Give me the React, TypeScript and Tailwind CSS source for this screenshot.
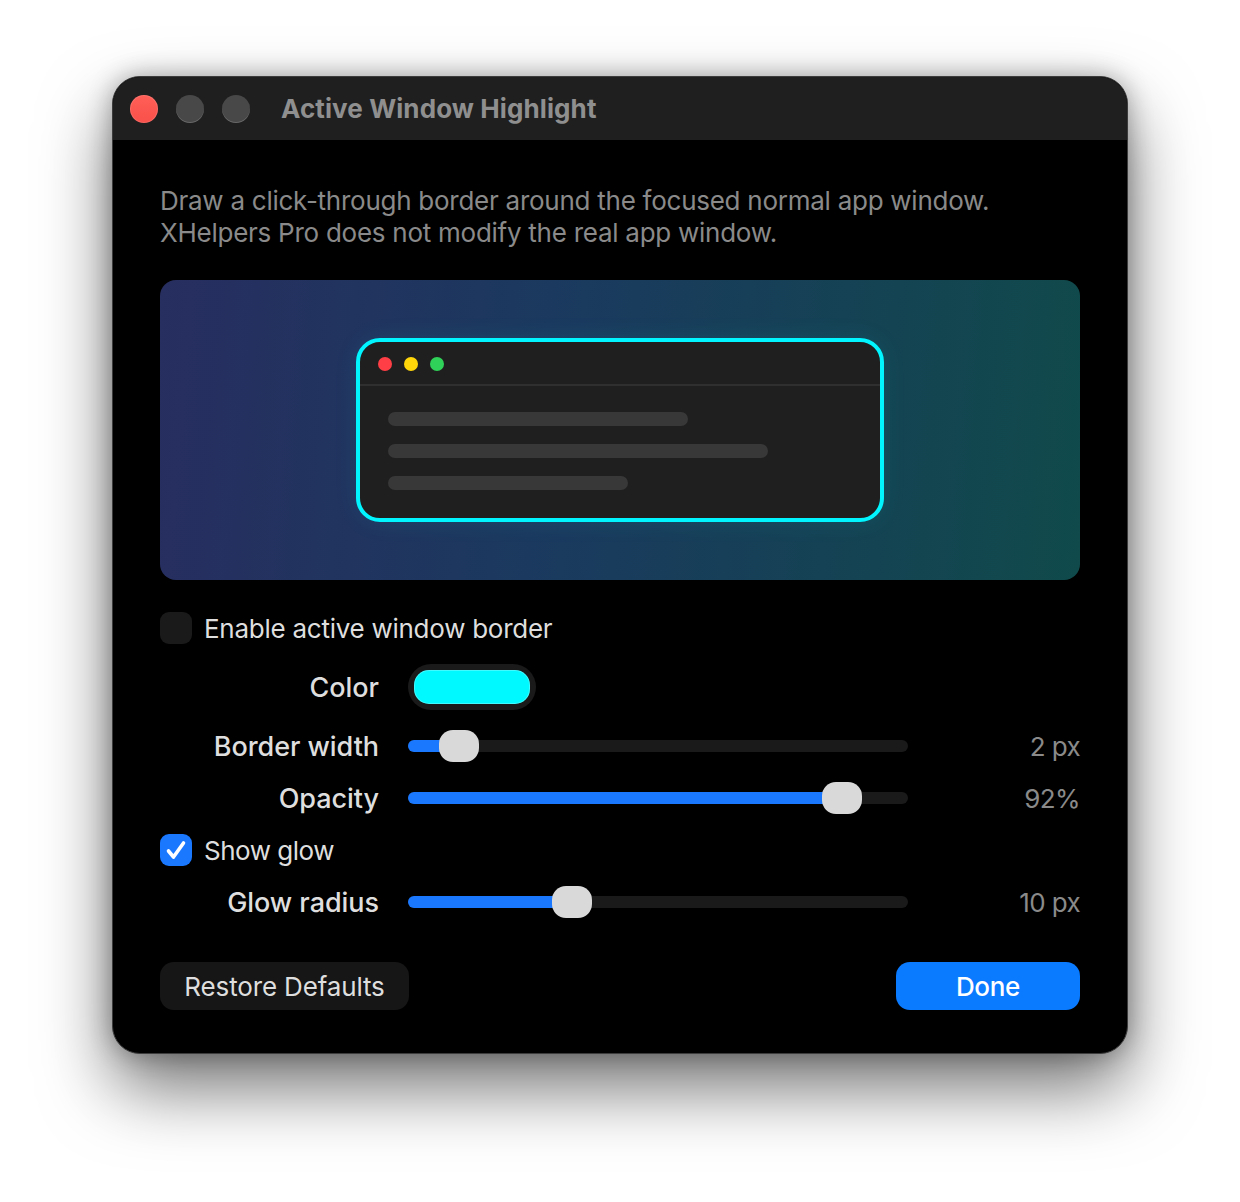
const sliders = {
  border: { label: 'Border width', value: '2 px', left: 31 },
  opacity: { label: 'Opacity', value: '92%', left: 414 },
  glow: { label: 'Glow radius', value: '10 px', left: 144 },
};

function Slider({ label, value, left }: { label: string; value: string; left: number }) {
  return (
    <div className="flex h-8 items-center">
      <span className="w-[219px] pt-[1px] text-right text-[27px] font-medium leading-8 tracking-[-0.05px] text-[#dedede]">{label}</span>
      <div className="relative ml-[29px] h-3 w-[500px] rounded-full bg-[#1a1a1a]">
        <div className="absolute inset-y-0 left-0 rounded-full bg-[#1a78ff]" style={{ width: left + 10 }} />
        <div className="absolute top-[-10px] h-8 w-10 rounded-[14px] bg-[#d9d9d9]" style={{ left }} />
      </div>
      <span className="ml-auto pt-[1px] text-[26px] leading-8 tracking-[-0.6px] text-[#8a8a8a]">{value}</span>
    </div>
  );
}

export default function App() {
  return (
    <div className="h-[1202px] w-[1240px] bg-white pl-[112px] pt-[76px] font-['Inter',sans-serif]">
      <div className="h-[978px] w-[1016px] overflow-hidden rounded-[28px] border border-[#3c3c3c] bg-black shadow-[0_34px_70px_rgba(0,0,0,0.55),0_0_24px_rgba(0,0,0,0.3)]">
        <div className="flex h-[63px] items-center bg-[#1f1f1f] pl-[17px]">
          <span className="h-7 w-7 rounded-full bg-gradient-to-b from-[#ff5f57] to-[#f9504a] shadow-[inset_0_0_0_1px_rgba(255,255,255,0.12)]" />
          <span className="ml-[18px] h-7 w-7 rounded-full bg-[#484848] shadow-[inset_0_-1px_0_rgba(255,255,255,0.18)]" />
          <span className="ml-[18px] h-7 w-7 rounded-full bg-[#484848] shadow-[inset_0_-1px_0_rgba(255,255,255,0.18)]" />
          <span className="ml-[31px] text-[26px] font-bold leading-8 tracking-[0.1px] text-[#8f8f8f]">Active Window Highlight</span>
        </div>

        <div className="px-[47px] pt-[45px]">
          <p className="text-[26px] leading-8 tracking-[-0.26px] text-[#8a8a8a]">
            Draw a click-through border around the focused normal app window.
            <br />
            XHelpers Pro does not modify the real app window.
          </p>

          <div className="mt-[31px] flex h-[300px] items-center justify-center rounded-2xl bg-[linear-gradient(95deg,#272e60,#1a3a5e_45%,#104a4b)]">
            <div className="h-[184px] w-[528px] overflow-hidden rounded-[24px] border-4 border-[#00f5ff] bg-[#1f1f1f] shadow-[0_0_24px_rgba(0,245,255,0.08)]">
              <div className="flex h-[44px] items-center gap-3 border-b-2 border-[#2f2f2f] pl-[18px] pt-[2px]">
                <span className="h-[14px] w-[14px] rounded-full bg-[#ff3f45]" />
                <span className="h-[14px] w-[14px] rounded-full bg-[#ffd60a]" />
                <span className="h-[14px] w-[14px] rounded-full bg-[#30d158]" />
              </div>
              <div className="flex flex-col gap-[18px] pl-[28px] pt-[26px]">
                <div className="h-[14px] w-[300px] rounded-full bg-[#383838]" />
                <div className="h-[14px] w-[380px] rounded-full bg-[#383838]" />
                <div className="h-[14px] w-[240px] rounded-full bg-[#383838]" />
              </div>
            </div>
          </div>

          <div className="mt-8 flex flex-col gap-5">
            <label className="flex h-8 items-center gap-3">
              <span className="h-8 w-8 rounded-[9px] bg-[#1a1a1a]" />
              <span className="pt-[2px] text-[26px] leading-8 tracking-[-0.26px] text-[#dedede]">Enable active window border</span>
            </label>

            <div className="flex h-[46px] items-center">
              <span className="w-[219px] pt-[1px] text-right text-[27px] font-medium leading-8 tracking-[-0.05px] text-[#dedede]">Color</span>
              <span className="ml-[29px] flex h-[46px] w-32 items-center justify-center rounded-full bg-[#1a1a1a]">
                <span className="h-[34px] w-[116px] rounded-[15px] bg-[#00f9ff] shadow-[inset_0_0_0_1px_rgba(255,255,255,0.25)]" />
              </span>
            </div>

            <Slider {...sliders.border} />
            <Slider {...sliders.opacity} />

            <label className="flex h-8 items-center gap-3">
              <span className="flex h-8 w-8 items-center justify-center rounded-[9px] bg-[#1a78ff]">
                <svg viewBox="0 0 32 32" className="h-8 w-8" fill="none" stroke="white" strokeWidth="3.6" strokeLinecap="round" strokeLinejoin="round">
                  <path d="M8.5 17l5 6L23.5 9" />
                </svg>
              </span>
              <span className="pt-[2px] text-[26px] leading-8 tracking-[-0.5px] text-[#dedede]">Show glow</span>
            </label>

            <Slider {...sliders.glow} />
          </div>

          <div className="mt-[44px] flex items-center justify-between">
            <button className="h-12 w-[249px] rounded-[14px] bg-[#161616] text-[26px] tracking-[-0.15px] text-[#dedede]">Restore Defaults</button>
            <button className="h-12 w-[184px] rounded-[14px] bg-[#0a7aff] text-[26px] font-medium tracking-[-0.3px] text-white">Done</button>
          </div>
        </div>
      </div>
    </div>
  );
}
